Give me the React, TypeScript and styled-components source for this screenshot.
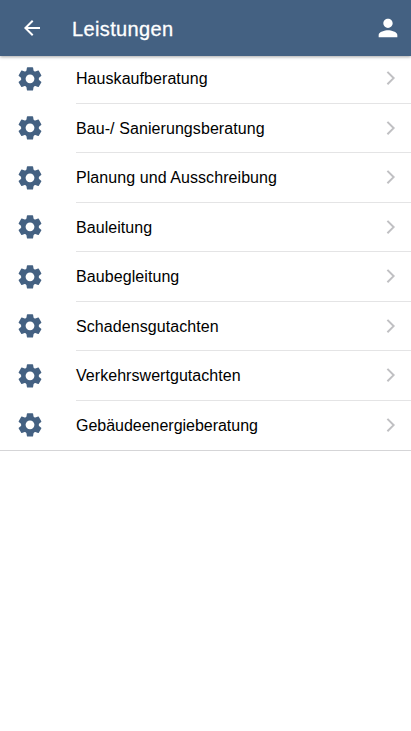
import React from "react";
import styled, { createGlobalStyle } from "styled-components";

const GlobalStyle = createGlobalStyle`
  *, *::before, *::after { box-sizing: border-box; }
  body { margin: 0; background: #fff; font-family: "Liberation Sans", Arial, sans-serif; }
`;

const Screen = styled.main`
  width: 100%;
  min-height: 100vh;
  background: #fff;
`;

const Toolbar = styled.header`
  position: relative;
  z-index: 1;
  display: flex;
  align-items: center;
  height: 56px;
  padding: 0 9px 0 20px;
  background: #446182;
  color: #fff;
  box-shadow: 0 1px 3px rgba(0, 0, 0, 0.35);
`;

const IconButton = styled.button`
  display: flex;
  padding: 0;
  border: 0;
  background: none;
  color: inherit;
`;

const Title = styled.h1`
  flex: 1;
  margin: 2px 0 0 28px;
  font-size: 20px;
  line-height: 24px;
  font-weight: 400;
  letter-spacing: 0.36px;
  -webkit-text-stroke: 0.3px currentColor;
`;

const List = styled.ul`
  margin: -2px 0 0;
  padding: 0;
  list-style: none;
  border-bottom: 1px solid #d5d5d7;
`;

const Row = styled.li`
  display: flex;
  align-items: center;
  height: 49.53px;
  padding-left: 16px;
  color: #446182;
`;

const RowBody = styled.div<{ $last: boolean }>`
  flex: 1;
  display: flex;
  align-items: center;
  justify-content: space-between;
  align-self: stretch;
  margin-left: 32px;
  padding: 2px 15px 0 0;
  border-bottom: 1px solid ${(p) => (p.$last ? "transparent" : "#e4e4e5")};
  color: #000;
`;

const Label = styled.span<{ $spacing: number }>`
  font-size: 16px;
  line-height: 20px;
  letter-spacing: ${(p) => p.$spacing}px;
  white-space: nowrap;
`;

const items = [
  { text: "Hauskaufberatung", spacing: 0.06 },
  { text: "Bau-/ Sanierungsberatung", spacing: 0.08 },
  { text: "Planung und Ausschreibung", spacing: 0.07 },
  { text: "Bauleitung", spacing: 0.06 },
  { text: "Baubegleitung", spacing: 0.08 },
  { text: "Schadensgutachten", spacing: 0.08 },
  { text: "Verkehrswertgutachten", spacing: 0.05 },
  { text: "Gebäudeenergieberatung", spacing: -0.02 },
];

const toothAngles = [0, 60, 120];

const Gear = () => (
  <svg width="28" height="28" viewBox="0 0 28 28" aria-hidden="true">
    <g fill="currentColor">
      <circle cx="14" cy="13.8" r="8.9" />
      {toothAngles.map((angle) => (
        <path
          key={angle}
          transform={`rotate(${angle} 14 13.8)`}
          d="M11.5 2.2h5q.5 0 .6.5l.8 5v12.2l-.8 5q-.1.5-.6.5h-5q-.5 0-.6-.5l-.8-5V7.7l.8-5q.1-.5.6-.5z"
        />
      ))}
    </g>
    <circle cx="14" cy="13.8" r="4.4" fill="#fff" />
  </svg>
);

const Chevron = () => (
  <svg width="11" height="16" viewBox="0 0 11 16" fill="none" stroke="#c0c0c3" strokeWidth="2" aria-hidden="true">
    <path d="M2.4.9 8.6 7.1 2.4 13.3" />
  </svg>
);

export default function App() {
  return (
    <>
      <GlobalStyle />
      <Screen>
        <Toolbar>
          <IconButton aria-label="Zurück">
            <svg width="24" height="24" viewBox="0 0 24 24" fill="currentColor">
              <path d="M20 11H7.83l5.59-5.59L12 4l-8 8 8 8 1.41-1.41L7.83 13H20z" />
            </svg>
          </IconButton>
          <Title>Leistungen</Title>
          <IconButton aria-label="Profil">
            <svg width="28" height="28" viewBox="0 0 24 24" fill="currentColor">
              <path d="M12 12c2.21 0 4-1.79 4-4s-1.79-4-4-4-4 1.79-4 4 1.79 4 4 4zm0 2c-2.67 0-8 1.34-8 4v2h16v-2c0-2.66-5.33-4-8-4z" />
            </svg>
          </IconButton>
        </Toolbar>
        <List>
          {items.map((item, i) => (
            <Row key={item.text}>
              <Gear />
              <RowBody $last={i === items.length - 1}>
                <Label $spacing={item.spacing}>{item.text}</Label>
                <Chevron />
              </RowBody>
            </Row>
          ))}
        </List>
      </Screen>
    </>
  );
}
